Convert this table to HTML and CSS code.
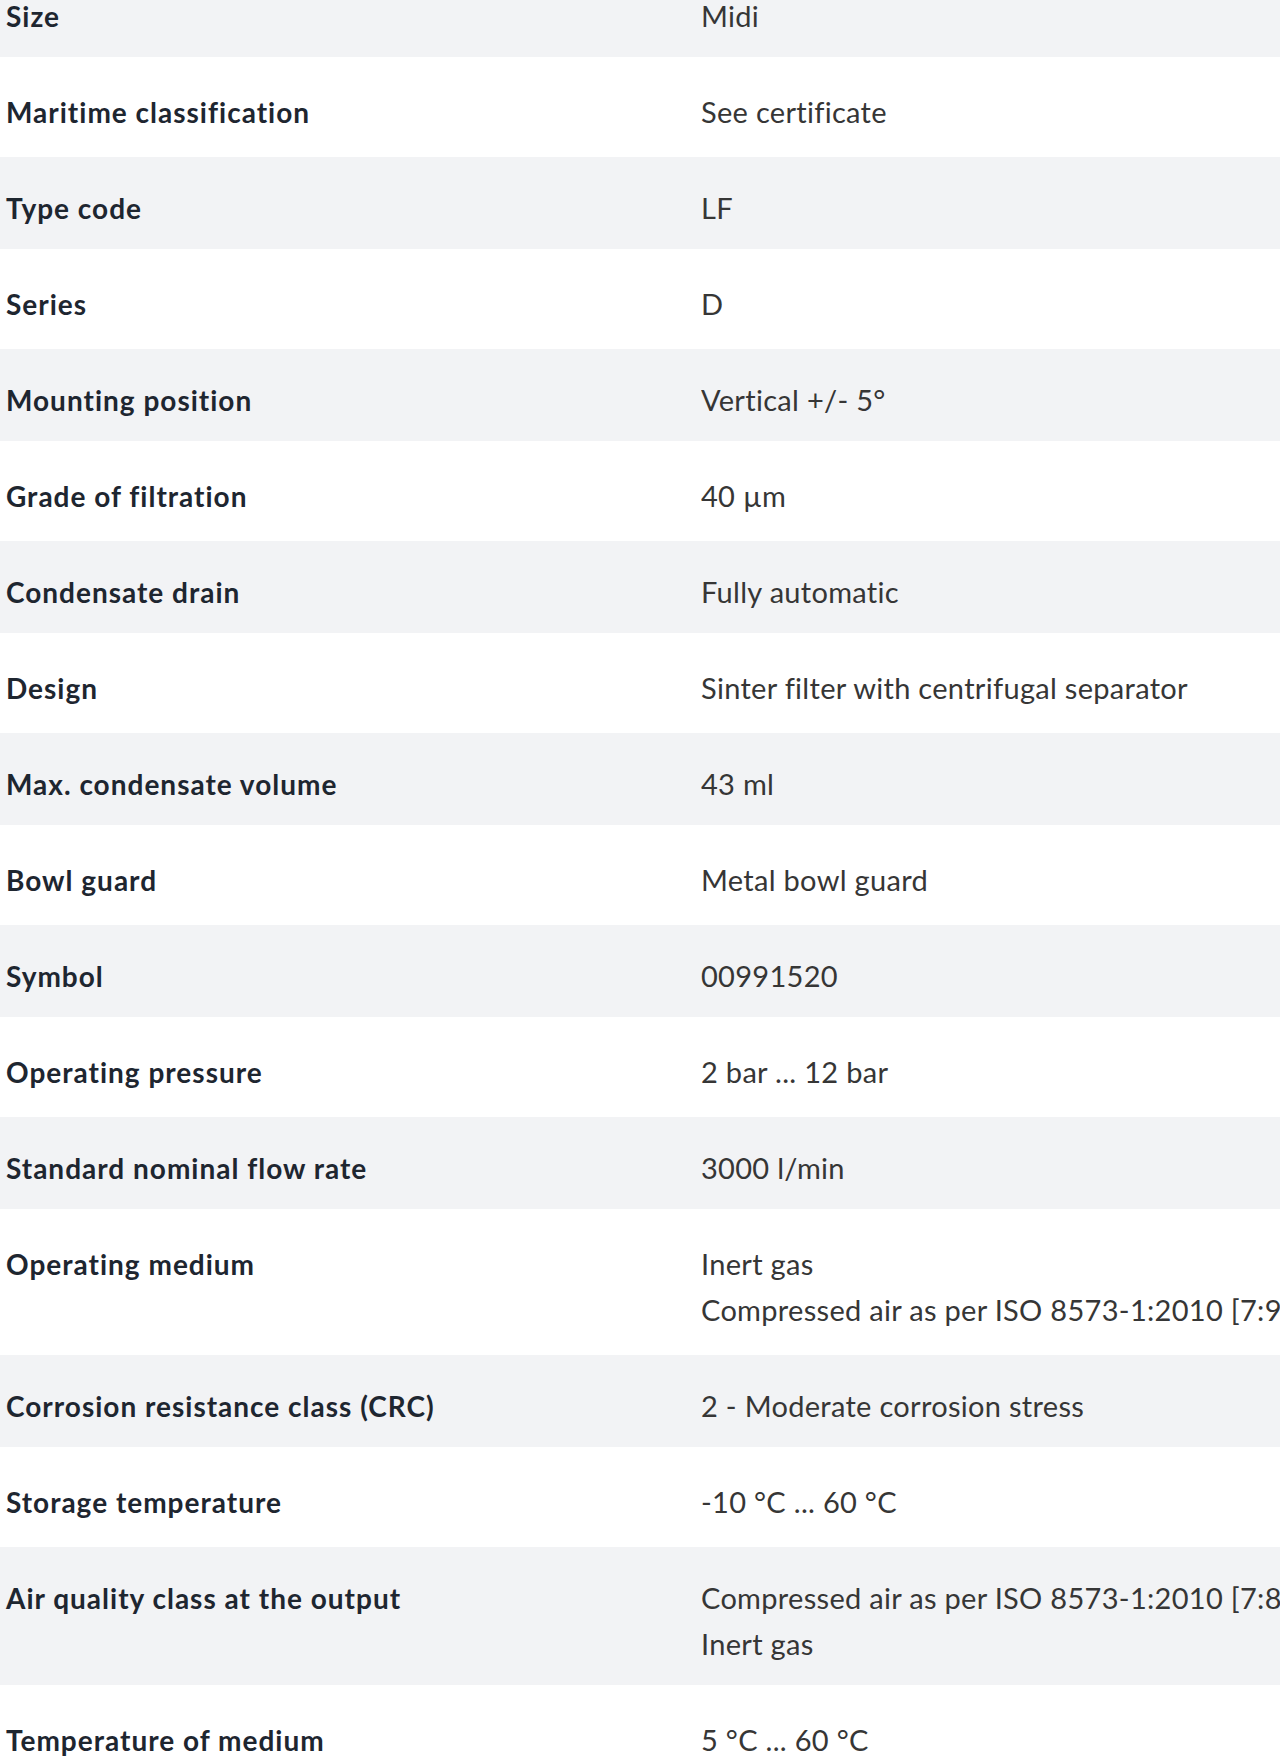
FILE: index.html
```html
<!DOCTYPE html>
<html lang="en">
<head>
<meta charset="utf-8">
<title>Technical data</title>
<link rel="stylesheet" href="styles.css">
</head>
<body>
<div class="specs">
  <div class="row"><div class="label">Size</div><div class="value">Midi</div></div>
  <div class="row"><div class="label">Maritime classification</div><div class="value">See certificate</div></div>
  <div class="row"><div class="label">Type code</div><div class="value">LF</div></div>
  <div class="row"><div class="label">Series</div><div class="value">D</div></div>
  <div class="row"><div class="label">Mounting position</div><div class="value">Vertical +/- 5°</div></div>
  <div class="row"><div class="label">Grade of filtration</div><div class="value">40 µm</div></div>
  <div class="row"><div class="label">Condensate drain</div><div class="value">Fully automatic</div></div>
  <div class="row"><div class="label">Design</div><div class="value">Sinter filter with centrifugal separator</div></div>
  <div class="row"><div class="label">Max. condensate volume</div><div class="value">43 ml</div></div>
  <div class="row"><div class="label">Bowl guard</div><div class="value">Metal bowl guard</div></div>
  <div class="row"><div class="label">Symbol</div><div class="value">00991520</div></div>
  <div class="row"><div class="label">Operating pressure</div><div class="value">2 bar ... 12 bar</div></div>
  <div class="row"><div class="label">Standard nominal flow rate</div><div class="value">3000 l/min</div></div>
  <div class="row"><div class="label">Operating medium</div><div class="value"><div>Inert gas</div><div>Compressed air as per ISO 8573-1:2010 [7:9:-]</div></div></div>
  <div class="row"><div class="label">Corrosion resistance class (CRC)</div><div class="value">2 - Moderate corrosion stress</div></div>
  <div class="row"><div class="label">Storage temperature</div><div class="value">-10 °C ... 60 °C</div></div>
  <div class="row"><div class="label">Air quality class at the output</div><div class="value"><div>Compressed air as per ISO 8573-1:2010 [7:8:-]</div><div>Inert gas</div></div></div>
  <div class="row"><div class="label">Temperature of medium</div><div class="value">5 °C ... 60 °C</div></div>
</div>
</body>
</html>
```

FILE: styles.css
```css
html, body {
  margin: 0;
  padding: 0;
  background: #ffffff;
  overflow-x: hidden;
}

body {
  font-family: Lato, "Open Sans", "Liberation Sans", sans-serif;
}

.specs {
  margin-top: -35px;
  width: 1280px;
}

.row {
  display: grid;
  grid-template-columns: 701px 1fr;
  align-items: start;
  line-height: 46px;
  white-space: nowrap;
}

.row:nth-child(odd) {
  background: #f2f3f5;
  padding: 28px 0 18px;
}

.row:nth-child(even) {
  background: #ffffff;
  padding: 32px 0 22px;
}

.label {
  padding-left: 6px;
  font-size: 28px;
  letter-spacing: 1px;
  font-weight: 700;
  color: #1e2630;
}

.value {
  font-size: 29px;
  letter-spacing: 0.3px;
  font-weight: 400;
  color: #363636;
  overflow: hidden;
}
```
